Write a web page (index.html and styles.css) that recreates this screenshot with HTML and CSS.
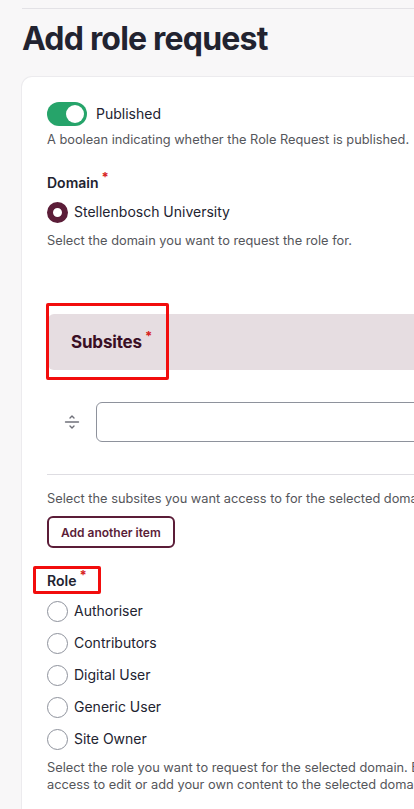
FILE: index.html
```html
<!DOCTYPE html>
<html lang="en">
<head>
<meta charset="utf-8">
<title>Add role request</title>
<link rel="stylesheet" href="styles.css">
</head>
<body>
<div class="viewport">
  <div class="page">
    <div class="topline"></div>
    <h1 class="title">Add role request</h1>
    <div class="card">
      <div class="toggle-row">
        <span class="toggle"><span class="knob"></span></span>
        <span class="toggle-label">Published</span>
      </div>
      <p class="desc desc-toggle">A boolean indicating whether the Role Request is published.</p>

      <div class="field field-domain">
        <div class="label">Domain<span class="req">*</span></div>
        <div class="radio-row">
          <span class="radio checked"></span>
          <span class="radio-label">Stellenbosch University</span>
        </div>
        <p class="desc desc-domain">Select the domain you want to request the role for.</p>
      </div>

      <div class="subsites">
        <div class="table-head">
          <span class="head-label">Subsites<span class="req">*</span></span>
          <span class="annot annot-subsites"></span>
        </div>
        <div class="table-row">
          <span class="handle">
            <svg width="16" height="18" viewBox="0 0 16 18" fill="none" stroke="#6f7079" stroke-width="1.4" stroke-linecap="round" stroke-linejoin="round">
              <polyline points="6,5 8,3 10,5"/>
              <line x1="1.5" y1="9" x2="14.5" y2="9"/>
              <polyline points="6,13 8,15 10,13"/>
            </svg>
          </span>
          <span class="input"></span>
        </div>
        <p class="desc desc-subsites">Select the subsites you want access to for the selected domain.</p>
        <button class="btn" type="button">Add another item</button>
      </div>

      <div class="field field-role">
        <div class="label label-role">Role<span class="req">*</span><span class="annot annot-role"></span></div>
        <div class="radio-list">
          <div class="radio-row list-row"><span class="radio"></span><span class="radio-label">Authoriser</span></div>
          <div class="radio-row list-row"><span class="radio"></span><span class="radio-label">Contributors</span></div>
          <div class="radio-row list-row"><span class="radio"></span><span class="radio-label">Digital User</span></div>
          <div class="radio-row list-row"><span class="radio"></span><span class="radio-label">Generic User</span></div>
          <div class="radio-row list-row"><span class="radio"></span><span class="radio-label">Site Owner</span></div>
        </div>
        <p class="desc desc-role">Select the role you want to request for the selected domain. Each role gives a different level of<br>access to edit or add your own content to the selected domain.</p>
      </div>
    </div>
  </div>
</div>
</body>
</html>
```

FILE: styles.css
```css
* { box-sizing: border-box; }

html, body {
  margin: 0;
  padding: 0;
  background: #f8f7f8;
}

body {
  font-family: Inter, "Noto Sans", "Liberation Sans", sans-serif;
  color: #222330;
}

.viewport {
  width: 414px;
  height: 809px;
  overflow: hidden;
}

.page {
  padding-left: 22px;
  width: 900px;
}

.topline {
  margin-top: 8px;
  border-top: 1px solid #e3e2e6;
}

.title {
  margin: 10px 0 0 0;
  font-size: 32px;
  line-height: 40px;
  font-weight: 700;
  letter-spacing: -0.025em;
  color: #222330;
}

.card {
  margin-top: 18px;
  background: #fff;
  border-radius: 10px 0 0 0;
  box-shadow: 0 0 0 1px #ecebee;
  padding: 25px 25px 40px 25px;
  width: 800px;
  min-height: 760px;
}

.toggle-row {
  display: flex;
  align-items: center;
  gap: 9px;
  height: 24px;
}

.toggle {
  width: 40px;
  height: 24px;
  border-radius: 12px;
  background: #26a46a;
  display: flex;
  align-items: center;
  justify-content: flex-end;
  padding-right: 3px;
}

.knob {
  width: 18px;
  height: 18px;
  border-radius: 50%;
  background: #fff;
}

.toggle-label, .radio-label {
  font-size: 14px;
  line-height: 20px;
  color: #222330;
}

.desc {
  margin: 0;
  font-size: 12.8px;
  line-height: 18px;
  color: #55565b;
}

.desc-toggle { margin-top: 5px; }

.field-domain { margin-top: 23px; }

.label {
  font-size: 14px;
  line-height: 20px;
  font-weight: 600;
  color: #222330;
  position: relative;
  display: inline-block;
}

.req {
  color: #d72222;
  font-size: 13px;
  line-height: 13px;
  vertical-align: top;
  position: relative;
  top: -2px;
  margin-left: 3px;
  font-weight: 700;
}

.radio-row {
  display: flex;
  align-items: center;
  gap: 6px;
}

.field-domain .radio-row {
  margin-top: 8px;
  height: 22px;
}

.radio {
  width: 21px;
  height: 21px;
  border-radius: 50%;
  border: 1px solid #8e929c;
  background: #fff;
  flex: none;
}

.radio.checked {
  border: 6px solid #5b1d38;
}

.desc-domain { margin-top: 9px; }

.subsites { margin-top: 64px; }

.table-head {
  position: relative;
  margin-left: 1px;
  height: 56px;
  background: #e6dde1;
  border-radius: 6px 0 0 6px;
  display: flex;
  align-items: center;
  padding-left: 23px;
}

.head-label {
  font-size: 17px;
  font-weight: 700;
  color: #3a0f24;
  letter-spacing: -0.01em;
}

.annot {
  position: absolute;
  border: 3px solid #f20d0d;
  border-radius: 2px;
  pointer-events: none;
}

.annot-subsites {
  left: -2px;
  top: -11px;
  width: 123px;
  height: 77px;
}

.table-row {
  display: flex;
  align-items: center;
  padding: 32px 0 32px 0;
  border-bottom: 1px solid #dedde2;
}

.handle {
  width: 49px;
  display: flex;
  justify-content: flex-start;
  padding-left: 17px;
}

.input {
  display: block;
  height: 40px;
  width: 500px;
  border: 1px solid #8e929c;
  border-radius: 6px;
  background: #fff;
}

.desc-subsites { margin-top: 15px; }

.btn {
  margin-top: 8px;
  display: block;
  height: 32px;
  padding: 0 12px;
  font-family: Inter, "Noto Sans", "Liberation Sans", sans-serif;
  font-size: 12px;
  font-weight: 600;
  color: #5b1d38;
  background: #fff;
  border: 2px solid #5b1d38;
  border-radius: 6px;
}

.field-role { margin-top: 22px; }

.annot-role {
  left: -14px;
  top: -5px;
  width: 68px;
  height: 28px;
}

.radio-list {
  margin-top: 4px;
  display: flex;
  flex-direction: column;
}

.list-row { height: 32px; }

.desc-role { margin-top: 4px; line-height: 17px; }
```
